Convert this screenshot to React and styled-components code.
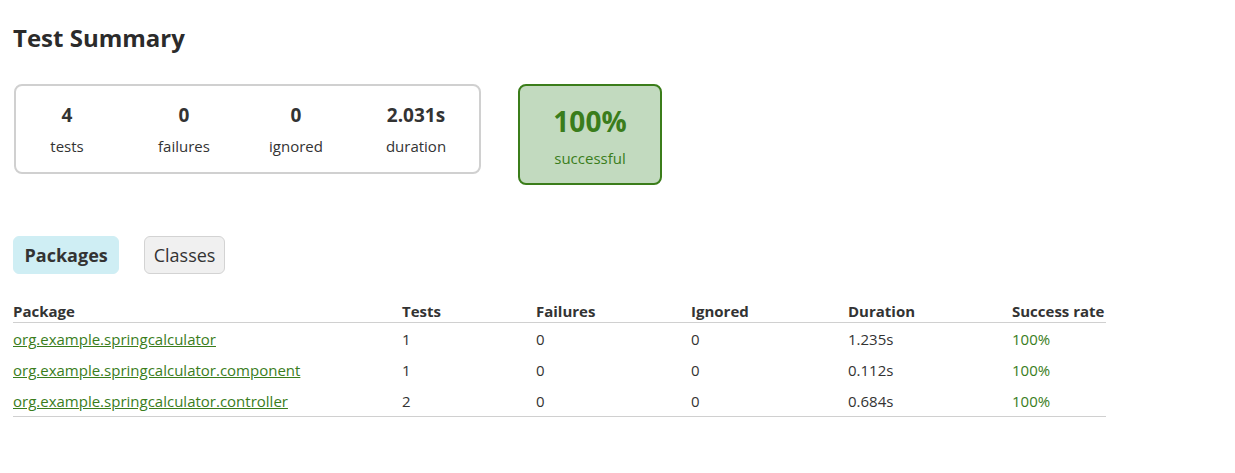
import React from 'react';
import styled, { createGlobalStyle } from 'styled-components';

const Global = createGlobalStyle`
  body {
    margin: 0;
    background: #fff;
    font-family: "Open Sans", "Noto Sans CJK KR", sans-serif;
    color: #333;
  }
`;

const Page = styled.div`
  padding: 20px 13px;
`;

const Title = styled.h1`
  margin: 0 0 28px;
  font-size: 24px;
  font-weight: 700;
  line-height: 36px;
  color: #2b2b2b;
`;

const SummaryRow = styled.div`
  display: flex;
  align-items: flex-start;
  gap: 37px;
  padding-left: 1px;
`;

const Counters = styled.div`
  display: flex;
  width: 467px;
  height: 90px;
  box-sizing: border-box;
  border: 2px solid #d0d0d0;
  border-radius: 8px;
  padding: 0;
  align-items: center;
  overflow: hidden;
`;

const Counter = styled.div`
  flex: 0 0 ${p => p.w}px;
  text-align: center;
  margin-top: -1px;
`;

const Num = styled.div`
  font-size: 19px;
  font-weight: 700;
  line-height: 28px;
  color: #333;
`;

const Label = styled.div`
  font-size: 15px;
  line-height: 22px;
  margin-top: 6px;
  color: #333;
`;

const Rate = styled.div`
  width: 144px;
  height: 101px;
  box-sizing: border-box;
  border: 2px solid #3b7d1a;
  border-radius: 8px;
  background: #c2dabf;
  color: #3a7d1c;
  text-align: center;
  padding-top: 17px;
`;

const RateNum = styled.div`
  font-size: 28px;
  font-weight: 700;
  line-height: 36px;
`;

const RateLabel = styled.div`
  font-size: 15px;
  line-height: 22px;
  margin-top: 8px;
`;

const Tabs = styled.div`
  display: flex;
  gap: 25px;
  margin-top: 51px;
`;

const Tab = styled.div`
  height: 38px;
  box-sizing: border-box;
  padding: 0 ${p => (p.active ? 10.5 : 8.5)}px;
  display: flex;
  align-items: center;
  border-radius: 6px;
  font-size: 18px;
  font-weight: ${p => (p.active ? 700 : 400)};
  color: #333;
  background: ${p => (p.active ? '#cfeef4' : '#f0f0f0')};
  border: 1px solid ${p => (p.active ? '#cfeef4' : '#d3d3d3')};
`;

const Table = styled.table`
  margin-top: 24px;
  width: 1093px;
  border-collapse: collapse;
  font-size: 15px;
`;

const Th = styled.th`
  text-align: left;
  font-weight: 700;
  padding: 0;
  height: 24px;
  vertical-align: bottom;
  line-height: 22px;
  border-bottom: 1px solid #d0d0d0;
  width: ${p => p.w}px;
`;

const Td = styled.td`
  padding: 0;
  height: 31px;
  line-height: 22px;
  color: ${p => (p.success ? '#3a7d1c' : '#333')};
`;

const Tr = styled.tr`
  &:last-child td {
    border-bottom: 1px solid #d0d0d0;
  }
`;

const PkgLink = styled.a`
  color: #3a7d1c;
  text-decoration: underline;
`;

const counters = [
  { n: '4', l: 'tests', w: 102 },
  { n: '0', l: 'failures', w: 132 },
  { n: '0', l: 'ignored', w: 92 },
  { n: '2.031s', l: 'duration', w: 148 },
];

const rows = [
  ['org.example.springcalculator', '1', '0', '0', '1.235s', '100%'],
  ['org.example.springcalculator.component', '1', '0', '0', '0.112s', '100%'],
  ['org.example.springcalculator.controller', '2', '0', '0', '0.684s', '100%'],
];

const cols = [
  ['Package', 389],
  ['Tests', 134],
  ['Failures', 155],
  ['Ignored', 157],
  ['Duration', 164],
  ['Success rate', 94],
];

export default function App() {
  return (
    <Page>
      <Global />
      <Title>Test Summary</Title>
      <SummaryRow>
        <Counters>
          {counters.map(c => (
            <Counter key={c.l} w={c.w}>
              <Num>{c.n}</Num>
              <Label>{c.l}</Label>
            </Counter>
          ))}
        </Counters>
        <Rate>
          <RateNum>100%</RateNum>
          <RateLabel>successful</RateLabel>
        </Rate>
      </SummaryRow>
      <Tabs>
        <Tab active>Packages</Tab>
        <Tab>Classes</Tab>
      </Tabs>
      <Table>
        <thead>
          <tr>
            {cols.map(([c, w]) => (
              <Th key={c} w={w}>{c}</Th>
            ))}
          </tr>
        </thead>
        <tbody>
          {rows.map(r => (
            <Tr key={r[0]}>
              <Td><PkgLink href="#">{r[0]}</PkgLink></Td>
              <Td>{r[1]}</Td>
              <Td>{r[2]}</Td>
              <Td>{r[3]}</Td>
              <Td>{r[4]}</Td>
              <Td success>{r[5]}</Td>
            </Tr>
          ))}
        </tbody>
      </Table>
    </Page>
  );
}
